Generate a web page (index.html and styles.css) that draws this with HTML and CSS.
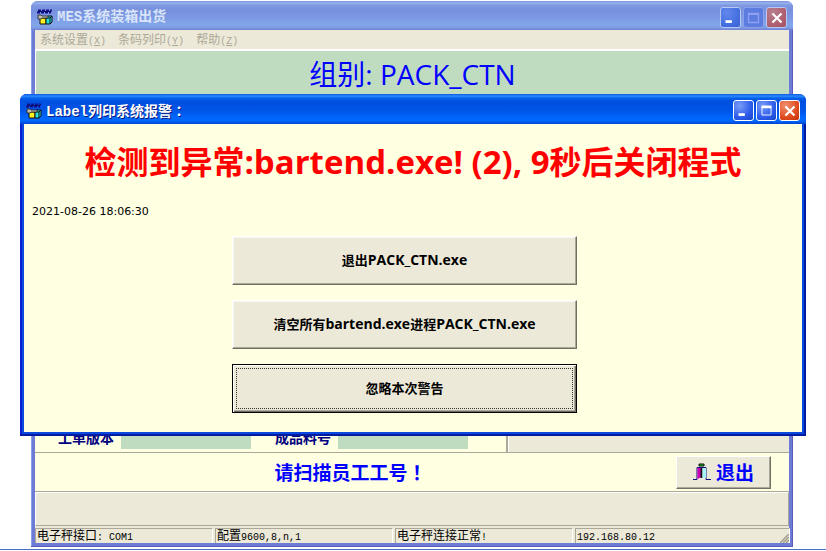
FILE: index.html
```html
<!DOCTYPE html>
<html lang="zh-CN">
<head>
    <meta charset="UTF-8">
    <meta name="viewport" content="width=device-width, initial-scale=1.0">
    <title>MES系统装箱出货</title>
    <link rel="stylesheet" href="styles.css">
</head>
<body>
    <svg class="symbols" aria-hidden="true">
        <symbol id="app-icon" viewBox="0 0 16 16">
            <path d="M1 1.500h14M0 3.500h14" stroke="#10108c" stroke-width="2" stroke-dasharray="3 1"/>
            <path d="M1 2.500h13" stroke="#10106c"/>
            <path d="M3 9h6v6H3z" fill="#fff020" stroke="#111"/>
            <path d="M9 9l2-2h4v6l-2 2H9z" fill="#28e0dc" stroke="#111"/>
            <path d="M9 9h4v6M13 9l2-2" fill="none" stroke="#111"/>
            <path d="M1 6h3l1 1h6v2H5L4 10H1z" fill="#c0beb0" stroke="#222" stroke-width=".8"/>
        </symbol>
    </svg>

    <main class="window main-window">
        <header class="titlebar inactive">
            <svg class="app-icon"><use href="#app-icon"/></svg>
            <span class="title">MES系统装箱出货</span>
            <div class="controls">
                <button class="control" aria-label="最小化"><svg viewBox="0 0 21 21"><path d="M5 15h7" stroke="#fff" stroke-width="3"/></svg></button>
                <button class="control" aria-label="最大化" disabled><svg viewBox="0 0 21 21"><path d="M5 6h11v10H5zM5 7h11" fill="none" stroke="#8f9ff0" stroke-width="1.5"/></svg></button>
                <button class="control close" aria-label="关闭"><svg viewBox="0 0 21 21"><path d="M6 6l10 10M16 6L6 16" stroke="#fff" stroke-width="2.4"/></svg></button>
            </div>
        </header>
        <nav class="menubar">
            <button>系统设置<span class="ascii">(<u>X</u>)</span></button>
            <button>条码列印<span class="ascii">(<u>Y</u>)</span></button>
            <button>帮助<span class="ascii">(<u>Z</u>)</span></button>
        </nav>
        <h1 class="group">组别: PACK_CTN</h1>
        <section class="order">
            <div class="fields">
                <label for="version">工单版本</label>
                <input id="version" readonly>
                <label for="part">成品料号</label>
                <input id="part" readonly>
            </div>
            <div class="side"></div>
        </section>
        <section class="prompt">
            <p>请扫描员工工号<span class="mark" lang="zh-TW">！</span></p>
            <button class="exit">
                <svg viewBox="0 0 18 18">
                    <path d="M6 1h5v2H6z" fill="#00c020" stroke="#111"/>
                    <path d="M0 16.500h4v-12h9v12h5" fill="none" stroke="#10107c"/>
                    <path d="M4.500 5h4v9l-4 2z" fill="#d000b8"/>
                    <path d="M8.500 5v10" stroke="#111" stroke-width="2"/>
                    <path d="M9.500 5h3.500v10h-3.500z" fill="#a8f4fa"/>
                </svg>
                退出
            </button>
        </section>
        <div class="panel"></div>
        <footer class="statusbar">
            <span>电子秤接口<span class="ascii">: COM1</span></span>
            <span>配置<span class="ascii">9600,8,n,1</span></span>
            <span>电子秤连接正常<span class="ascii">!</span></span>
            <span><span class="ascii">192.168.80.12</span></span>
            <svg class="grip" viewBox="0 0 9 9"><path d="M0 9l9-9M3 9l6-6M6 9l3-3" stroke="#a09c8c" stroke-width="1.5"/></svg>
        </footer>
    </main>

    <div class="window dialog" role="dialog" aria-labelledby="dialog-title">
        <header class="titlebar">
            <svg class="app-icon"><use href="#app-icon"/></svg>
            <span class="title" id="dialog-title">Label列印系统报警<span class="mark" lang="zh-TW">：</span></span>
            <div class="controls">
                <button class="control" aria-label="最小化"><svg viewBox="0 0 21 21"><path d="M5 15h7" stroke="#fff" stroke-width="3"/></svg></button>
                <button class="control" aria-label="最大化"><svg viewBox="0 0 21 21"><path d="M5.500 6.500h10v9h-10z" fill="none" stroke="#fff"/><path d="M5 6.500h11" stroke="#fff" stroke-width="3"/></svg></button>
                <button class="control close" aria-label="关闭"><svg viewBox="0 0 21 21"><path d="M6 6l10 10M16 6L6 16" stroke="#fff" stroke-width="2.4"/></svg></button>
            </div>
        </header>
        <div class="dialog-body">
            <h2>检测到异常<span class="latin">:bartend.exe! (2), 9</span>秒后关闭程式</h2>
            <time datetime="2021-08-26T18:06:30">2021-08-26 18:06:30</time>
            <div class="actions">
                <button>退出<span class="latin">PACK_CTN.exe</span></button>
                <button>清空所有<span class="latin">bartend.exe</span>进程<span class="latin">PACK_CTN.exe</span></button>
                <button class="default">忽略本次警告</button>
            </div>
        </div>
    </div>
</body>
</html>
```
FILE: styles.css
```css
* {
    box-sizing: border-box;
}
body {
    margin: 0;
    height: 100vh;
    padding: 1px 33px 0 31px;
    background: linear-gradient(#4472c4, #4472c4) 0 calc(100% - 1px) / 100% 1px no-repeat white;
    font-family: "Open Sans", "Noto Sans CJK SC", sans-serif;
    font-size: 12px;
    overflow: hidden;
}
h1, h2, p {
    margin: 0;
}
button {
    font-family: inherit;
    color: inherit;
}
.symbols {
    position: absolute;
    width: 0;
    height: 0;
}

/* window frame */
.window {
    display: flex;
    flex-direction: column;
    border-radius: 7px 7px 0 0;
}
.main-window {
    height: calc(100vh - 5px);
    padding: 0 4px 4px;
    background: #6b7bd6;
    box-shadow: inset -1px -1px #5a5cbc, inset 1px 0 #8ea0e8;
}
.dialog {
    position: absolute;
    top: 94px;
    left: 20px;
    right: 20px;
    padding: 0 4px 4px;
    background: #0a48e0;
    box-shadow: inset -2px -2px #001ca0, inset 2px 0 #0820d0;
}
.titlebar {
    display: flex;
    align-items: center;
    flex: none;
    height: 30px;
    margin: 0 -4px;
    padding: 3px 6px 0;
    border-radius: 7px 7px 0 0;
    background: linear-gradient(#0a54e0, #2c8cff 7%, #0560ea 14%, #0050e0 25%, #0054e6 55%, #0068ff 80%, #0066fc 90%, #0044d0);
    color: white;
}
.titlebar.inactive {
    height: 29px;
    background: linear-gradient(#7890dc, #98b4ec 7%, #7e9ae2 14%, #7890dc 30%, #7c98e4 55%, #82a6ea 82%, #7e9ce2 92%, #7080d4);
    color: #d8e4f8;
}
.app-icon {
    width: 16px;
    height: 16px;
}
.title {
    flex: 1;
    padding-left: 4px;
    font: bold 14px/20px "Liberation Mono", "Noto Sans CJK SC", monospace;
}
.dialog .title {
    text-shadow: 1px 1px #0a1c80;
}
/* full-width punctuation centred in its cell */
.mark {
    font-family: "Noto Sans CJK TC", sans-serif;
}
.controls {
    display: flex;
    gap: 2px;
}
.control {
    width: 21px;
    height: 21px;
    padding: 0;
    border: 1px solid white;
    border-radius: 3px;
    background: radial-gradient(circle at 30% 25%, #7a9cf8, #2c5cea 60%, #1844c8);
}
.control svg {
    display: block;
    width: 19px;
    height: 19px;
}
.control.close {
    background: radial-gradient(circle at 30% 25%, #f09070, #e04c20 60%, #c03008);
}
.inactive .control {
    border-color: #b8c8f4;
    background: radial-gradient(circle at 30% 25%, #6488ec, #4470e0 60%, #3c60d0);
}
.inactive .control:disabled {
    border-color: #8ca0ea;
    background: #5c7ce0;
}
.inactive .control.close {
    background: radial-gradient(circle at 30% 25%, #b88090, #b06070 60%, #a05060);
}

/* main window */
.menubar {
    display: flex;
    gap: 12px;
    height: 21px;
    padding: 1px 5px 0;
    border-bottom: 2px solid white;
    background: #ece9d8;
}
.menubar button {
    padding: 0;
    border: 0;
    background: none;
    font-size: 12px;
    line-height: 18px;
    color: #aca899;
}
.ascii {
    font-family: "Liberation Mono", monospace;
    font-size: 10px;
}
.group {
    height: 50px;
    border-left: 1px solid white;
    background: #c0dcc0;
    color: blue;
    font-size: 28px;
    font-weight: normal;
    line-height: 46px;
    text-align: center;
}
.order {
    display: flex;
    flex: 1;
    border-bottom: 1px solid #aca899;
    background: #ffffe1;
}
.fields {
    display: flex;
    align-items: flex-end;
    flex: 1;
    padding: 0 0 3px 23px;
}
.fields label {
    margin-right: 7px;
    font-size: 14px;
    font-weight: bold;
    line-height: 22px;
    color: navy;
}
.fields input {
    width: 130px;
    height: 22px;
    margin-right: 24px;
    padding: 0;
    border: 0;
    background: #c0dcc0;
}
.side {
    width: 283px;
    border-left: 2px solid #aca899;
    background: #ece9d8;
    box-shadow: inset 1px 0 white;
}
.prompt {
    display: flex;
    align-items: center;
    gap: 10px;
    height: 39px;
    padding-right: 18px;
    border-bottom: 1px solid #aca899;
    background: #ffffe1;
    color: blue;
    font-size: 19px;
    font-weight: bold;
}
.prompt p {
    flex: 1;
    text-align: center;
}
.exit {
    display: flex;
    align-items: center;
    justify-content: center;
    gap: 5px;
    width: 95px;
    height: 33px;
    padding: 0;
    border: 1px solid;
    border-color: white #716f64 #716f64 white;
    background: #ece9d8;
    box-shadow: inset -1px -1px #aca899;
    font-size: 19px;
    font-weight: bold;
}
.exit svg {
    width: 18px;
    height: 18px;
}
.panel {
    height: 34px;
    border: 1px solid;
    border-color: white #aca899 #aca899 white;
    background: #ece9d8;
}
.statusbar {
    display: flex;
    gap: 2px;
    height: 17px;
    padding-top: 2px;
    background: #ece9d8;
    line-height: 14px;
}
.statusbar > span {
    flex: 0 0 178px;
    padding-left: 1px;
    border-top: 1px solid #aca899;
    border-left: 1px solid #aca899;
    border-right: 1px solid white;
    white-space: nowrap;
}
.statusbar > span:last-of-type {
    flex: 1;
}
.grip {
    align-self: flex-end;
    width: 9px;
    height: 9px;
    margin-left: -12px;
}

/* alarm dialog */
.dialog-body {
    display: flex;
    flex-direction: column;
    padding: 16px 0 19px;
    background: #ffffe1;
}
.dialog h2 {
    color: red;
    font-size: 32px;
    line-height: 44px;
    text-align: center;
}
.dialog h2 .latin {
    font-size: 33px;
}
.dialog time {
    margin: 20px 0 16px;
    padding-left: 8px;
    font: 11px/16px "DejaVu Sans", sans-serif;
}
.actions {
    display: flex;
    flex-direction: column;
    align-items: center;
    gap: 15px;
    padding-right: 17px;
}
.actions button {
    width: 345px;
    height: 49px;
    padding: 0 0 2px;
    border: 1px solid;
    border-color: white #716f64 #716f64 white;
    background: #ece9d8;
    box-shadow: inset -1px -1px #aca899, inset 1px 1px #f8f6ec;
    font-size: 13px;
    font-weight: bold;
}
.actions .latin {
    font-size: 14px;
}
.actions .default {
    border-color: black;
    box-shadow: inset 1px 1px white, inset -1px -1px #716f64, inset -2px -2px #aca899;
    outline: 1px dotted #333;
    outline-offset: -5px;
}
```
